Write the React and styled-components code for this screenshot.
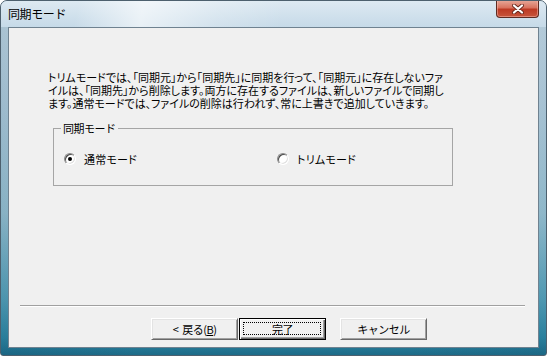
import React from "react";
import styled, { createGlobalStyle } from "styled-components";

const GlobalStyle = createGlobalStyle`
  html, body {
    margin: 0;
    padding: 0;
    width: 547px;
    height: 356px;
    overflow: hidden;
    background: #ffffff;
  }
  body {
    font-family: "Noto Sans CJK JP", "Liberation Sans", sans-serif;
  }
`;

const Window = styled.div`
  width: 547px;
  height: 356px;
  box-sizing: border-box;
  display: flex;
  flex-direction: column;
  border: 1px solid #4d606e;
  border-radius: 7px 7px 3px 3px;
  overflow: hidden;
  background:
    linear-gradient(90deg, rgba(20, 80, 110, 0.2) 0%, rgba(255, 255, 255, 0) 25%, rgba(255, 255, 255, 0) 75%, rgba(20, 80, 110, 0.15) 100%),
    linear-gradient(to bottom, #d3e2ed 0%, #bfd5e4 30%, #a4c9d9 60%, #5aa5bd 84%, #2e88a5 95%, #1d6b88 100%);
`;

const TitleBar = styled.div`
  height: 26px;
  display: flex;
  align-items: flex-start;
  justify-content: space-between;
  background:
    linear-gradient(100deg, rgba(255, 255, 255, 0) 14%, rgba(255, 255, 255, 0.6) 26%, rgba(255, 255, 255, 0.2) 40%, rgba(255, 255, 255, 0) 52%),
    linear-gradient(to bottom, #dde9f2 0%, #c6dae8 100%);
`;

const Title = styled.span`
  padding: 6px 0 0 7px;
  font-size: 12px;
  line-height: 14px;
  letter-spacing: -0.4px;
  color: #000;
`;

const CloseButton = styled.div`
  width: 43px;
  height: 18px;
  margin: -1px 7px 0 0;
  box-sizing: border-box;
  display: flex;
  align-items: center;
  justify-content: center;
  border: 1px solid #5e2b22;
  border-top: none;
  border-radius: 0 0 4px 4px;
  background: linear-gradient(to bottom, #e8ab9c 0%, #d9735f 45%, #bd3a24 55%, #c7553c 100%);
  box-shadow: inset 0 0 0 1px rgba(255, 200, 190, 0.45);
`;

const Client = styled.div`
  flex: 1;
  margin: 0 7px 7px 7px;
  display: flex;
  flex-direction: column;
  border: 1px solid #6f8290;
  background: #f0f0f0;
`;

const Description = styled.p`
  margin: 43px 0 0 39px;
  font-size: 11px;
  line-height: 13px;
  letter-spacing: 0;
  font-feature-settings: "palt";
  color: #000;
  white-space: nowrap;
`;

const GroupBox = styled.fieldset`
  margin: 11px 0 0 44px;
  padding: 0;
  width: 400px;
  box-sizing: border-box;
  border: 1px solid #a5a5a5;
  min-inline-size: 0;
`;

const GroupLegend = styled.legend`
  margin-left: 7px;
  padding: 0 2px;
  font-size: 11px;
  line-height: 14px;
  letter-spacing: -0.5px;
  color: #000;
`;

const RadioRow = styled.div`
  display: grid;
  grid-template-columns: 213px auto;
  padding: 17px 0 20px 10px;
`;

const RadioOption = styled.label`
  display: flex;
  align-items: center;
  gap: 8px;
  height: 13px;
  font-size: 11px;
  letter-spacing: 0.2px;
  font-feature-settings: "palt";
  color: #000;
`;

const RadioCircle = styled.span`
  width: 12px;
  height: 12px;
  box-sizing: border-box;
  border-radius: 50%;
  border: 1px solid;
  border-color: #8a8a8a #ffffff #ffffff #8a8a8a;
  box-shadow: inset 1px 1px 0 #4a4a4a, inset -1px -1px 0 #e0e0e0;
  background: #ffffff;
  display: flex;
  align-items: center;
  justify-content: center;

  &::after {
    content: "";
    width: 4px;
    height: 4px;
    border-radius: 50%;
    background: ${({ $checked }) => ($checked ? "#000" : "transparent")};
  }
`;

const Spacer = styled.div`
  flex: 1;
`;

const Separator = styled.div`
  height: 0;
  margin: 0 13px 11px 11px;
  border-top: 1px solid #a0a0a0;
  border-bottom: 1px solid #ffffff;
`;

const ButtonRow = styled.div`
  display: flex;
  padding: 0 0 7px 142px;
`;

const Button = styled.div`
  position: relative;
  width: 87px;
  height: 22px;
  box-sizing: border-box;
  margin-right: ${({ $gap }) => $gap || 0}px;
  display: flex;
  align-items: center;
  justify-content: center;
  font-size: 11px;
  letter-spacing: -0.5px;
  color: #000;
  background: #f0f0f0;
  border: 1px solid;
  border-color: ${({ $default }) =>
    $default ? "#000 #000 #000 #000" : "#ffffff #696969 #696969 #ffffff"};
  box-shadow: ${({ $default }) =>
    $default
      ? "inset 1px 1px 0 #ffffff, inset -1px -1px 0 #696969, inset -2px -2px 0 #a0a0a0"
      : "inset 1px 1px 0 #e3e3e3, inset -1px -1px 0 #a0a0a0"};

  &::after {
    content: "";
    display: ${({ $default }) => ($default ? "block" : "none")};
    position: absolute;
    inset: 3px 4px 4px 3px;
    border: 1px dotted #000;
  }

  u {
    text-decoration: underline;
    text-underline-offset: 1px;
  }
`;

function CloseIcon() {
  return (
    <svg width="12" height="10" viewBox="0 0 12 10">
      <path d="M2 1.5 L10 8.5 M10 1.5 L2 8.5" stroke="#6a2a1f" strokeWidth="4" strokeLinecap="round" />
      <path d="M2 1.5 L10 8.5 M10 1.5 L2 8.5" stroke="#ffffff" strokeWidth="2.2" strokeLinecap="round" />
    </svg>
  );
}

function Radio({ checked, label }) {
  return (
    <RadioOption>
      <RadioCircle $checked={checked} />
      {label}
    </RadioOption>
  );
}

export default function App() {
  return (
    <>
      <GlobalStyle />
      <Window>
        <TitleBar>
          <Title>同期モード</Title>
          <CloseButton>
            <CloseIcon />
          </CloseButton>
        </TitleBar>
        <Client>
          <Description>
            トリムモードでは、「同期元」から「同期先」に同期を行って、「同期元」に存在しないファ
            <br />
            イルは、「同期先」から削除します。両方に存在するファイルは、新しいファイルで同期し
            <br />
            ます。通常モードでは、ファイルの削除は行われず、常に上書きで追加していきます。
          </Description>
          <GroupBox>
            <GroupLegend>同期モード</GroupLegend>
            <RadioRow>
              <Radio checked label="通常モード" />
              <Radio label="トリムモード" />
            </RadioRow>
          </GroupBox>
          <Spacer />
          <Separator />
          <ButtonRow>
            <Button $gap={1}>
              &lt;&nbsp;&nbsp;戻る(<u>B</u>)
            </Button>
            <Button $default $gap={14}>
              完了
            </Button>
            <Button>キャンセル</Button>
          </ButtonRow>
        </Client>
      </Window>
    </>
  );
}
